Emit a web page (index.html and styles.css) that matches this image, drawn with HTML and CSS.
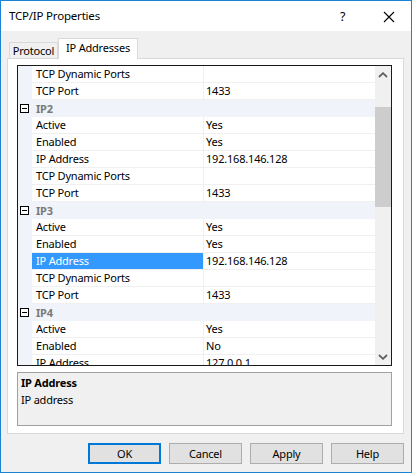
FILE: index.html
```html
<!DOCTYPE html>
<html>
<head>
<meta charset="utf-8">
<link rel="stylesheet" href="styles.css">
</head>
<body>
<div class="window">
  <div class="titlebar">
    <span class="title">TCP/IP Properties</span>
    <span class="help">?</span>
    <span class="close"><svg width="12" height="12" viewBox="0 0 12 12"><path d="M1 1L11 11M11 1L1 11" stroke="#000" stroke-width="1.1" fill="none"/></svg></span>
  </div>
  <div class="body">
    <div class="tabs">
      <div class="tab">Protocol</div>
      <div class="tab active">IP Addresses</div>
    </div>
    <div class="panel">
      <div class="grid">
        <div class="rows">
          <div class="row"><div class="gutter"></div><div class="name">TCP Dynamic Ports</div><div class="sep"></div><div class="value"></div></div>
          <div class="row"><div class="gutter"></div><div class="name">TCP Port</div><div class="sep"></div><div class="value">1433</div></div>
          <div class="row cat"><div class="gutter"><span class="minus"></span></div><div class="label">IP2</div></div>
          <div class="row"><div class="gutter"></div><div class="name">Active</div><div class="sep"></div><div class="value">Yes</div></div>
          <div class="row"><div class="gutter"></div><div class="name">Enabled</div><div class="sep"></div><div class="value">Yes</div></div>
          <div class="row"><div class="gutter"></div><div class="name">IP Address</div><div class="sep"></div><div class="value">192.168.146.128</div></div>
          <div class="row"><div class="gutter"></div><div class="name">TCP Dynamic Ports</div><div class="sep"></div><div class="value"></div></div>
          <div class="row"><div class="gutter"></div><div class="name">TCP Port</div><div class="sep"></div><div class="value">1433</div></div>
          <div class="row cat"><div class="gutter"><span class="minus"></span></div><div class="label">IP3</div></div>
          <div class="row"><div class="gutter"></div><div class="name">Active</div><div class="sep"></div><div class="value">Yes</div></div>
          <div class="row"><div class="gutter"></div><div class="name">Enabled</div><div class="sep"></div><div class="value">Yes</div></div>
          <div class="row selected"><div class="gutter"></div><div class="name">IP Address</div><div class="sep"></div><div class="value">192.168.146.128</div></div>
          <div class="row"><div class="gutter"></div><div class="name">TCP Dynamic Ports</div><div class="sep"></div><div class="value"></div></div>
          <div class="row"><div class="gutter"></div><div class="name">TCP Port</div><div class="sep"></div><div class="value">1433</div></div>
          <div class="row cat"><div class="gutter"><span class="minus"></span></div><div class="label">IP4</div></div>
          <div class="row"><div class="gutter"></div><div class="name">Active</div><div class="sep"></div><div class="value">Yes</div></div>
          <div class="row"><div class="gutter"></div><div class="name">Enabled</div><div class="sep"></div><div class="value">No</div></div>
          <div class="row"><div class="gutter"></div><div class="name">IP Address</div><div class="sep"></div><div class="value">127.0.0.1</div></div>
        </div>
        <div class="scrollbar">
          <div class="sb-btn"><svg width="10" height="6" viewBox="0 0 10 6"><path d="M1 5L5 1.2L9 5" stroke="#606060" stroke-width="1.8" fill="none"/></svg></div>
          <div class="sb-track"><div class="sb-thumb"></div></div>
          <div class="sb-btn"><svg width="10" height="6" viewBox="0 0 10 6"><path d="M1 1L5 4.8L9 1" stroke="#606060" stroke-width="1.8" fill="none"/></svg></div>
        </div>
      </div>
      <div class="desc">
        <div class="desc-title">IP Address</div>
        <div class="desc-text">IP address</div>
      </div>
    </div>
    <div class="buttons">
      <div class="btn default">OK</div>
      <div class="btn">Cancel</div>
      <div class="btn">Apply</div>
      <div class="btn">Help</div>
    </div>
  </div>
</div>
</body>
</html>
```
FILE: styles.css
```css
* { box-sizing: border-box; }
html, body { margin: 0; padding: 0; }
body {
  font-family: "Noto Sans", "DejaVu Sans", sans-serif;
  font-size: 11px;
  letter-spacing: -0.2px;
  color: #000;
  background: #fff;
}
.window {
  width: 412px;
  height: 473px;
  border: 1px solid #1883d7;
  background: #f0f0f0;
  display: flex;
  flex-direction: column;
}
.titlebar {
  height: 30px;
  background: #fff;
  display: flex;
  align-items: center;
  position: relative;
}
.title {
  margin-left: 8px;
  margin-top: -1px;
  font-size: 11.5px;
}
.help {
  position: absolute;
  left: 339px;
  top: 7px;
  font-size: 12.5px;
}
.close {
  position: absolute;
  left: 382px;
  top: 10px;
  width: 12px;
  height: 12px;
  display: flex;
}
.body {
  padding: 7px 7px 0 6px;
  display: flex;
  flex-direction: column;
}
.tabs {
  height: 20px;
  display: flex;
  align-items: flex-end;
  padding-left: 2px;
  position: relative;
  z-index: 1;
}
.tab {
  height: 16px;
  width: 49px;
  border: 1px solid #d9d9d9;
  border-bottom: none;
  background: #f0f0f0;
  display: flex;
  align-items: center;
  justify-content: center;
  line-height: 14px;
  padding-top: 1px;
}
.tab.active {
  height: 21px;
  width: 80px;
  margin-bottom: -1px;
  background: #fff;
  padding-top: 0;
  padding-bottom: 2px;
}
.panel {
  width: 397px;
  background: #fff;
  border: 1px solid #d9d9d9;
  padding: 6px 11px 7px 9px;
  display: flex;
  flex-direction: column;
  gap: 6px;
}
.grid {
  width: 375px;
  height: 301px;
  border: 1px solid #1a1a1a;
  display: flex;
  overflow: hidden;
}
.rows {
  width: 357px;
  overflow: hidden;
  display: flex;
  flex-direction: column;
}
.row {
  display: flex;
  height: 17px;
  flex: 0 0 17px;
}
.gutter {
  width: 14px;
  flex: 0 0 14px;
  background: #f0f4fa;
  position: relative;
}
.name, .value, .sep {
  border-bottom: 1px solid #f0f0f0;
  line-height: 16px;
  white-space: nowrap;
  overflow: hidden;
}
.name {
  width: 171px;
  padding-left: 4px;
}
.sep {
  width: 1px;
  background: #f0f0f0;
}
.value {
  flex: 1;
  padding-left: 2px;
}
.row.selected .name {
  background: #3399ff;
  color: #fff;
}
.row.cat {
  background: #f0f4fa;
}
.label {
  padding-left: 4px;
  line-height: 17px;
  font-weight: bold;
  color: #7a7a7a;
}
.minus {
  position: absolute;
  left: 2px;
  top: 4px;
  width: 9px;
  height: 9px;
  border: 1px solid #000;
  background: #fff;
}
.minus::after {
  content: "";
  position: absolute;
  left: 1px;
  top: 3px;
  width: 5px;
  height: 1px;
  background: #000;
}
.scrollbar {
  width: 16px;
  flex: 0 0 16px;
  background: #f0f0f0;
  display: flex;
  flex-direction: column;
}
.sb-btn {
  height: 17px;
  flex: 0 0 17px;
  display: flex;
  align-items: center;
  justify-content: center;
}
.sb-track {
  flex: 1;
  padding-top: 24px;
}
.sb-thumb {
  height: 100px;
  background: #cdcdcd;
}
.desc {
  width: 375px;
  height: 54px;
  border: 1px solid #a0a0a0;
  background: #f0f0f0;
  padding: 2px 3px;
}
.desc-title {
  font-weight: bold;
  line-height: 16px;
}
.desc-text {
  line-height: 17px;
}
.buttons {
  margin-top: 9px;
  display: flex;
  justify-content: flex-end;
  gap: 8px;
}
.btn {
  width: 73px;
  height: 21px;
  border: 1px solid #adadad;
  background: #e1e1e1;
  display: flex;
  align-items: center;
  justify-content: center;
  line-height: 14px;
}
.btn.default {
  border: 2px solid #0078d7;
}
```
